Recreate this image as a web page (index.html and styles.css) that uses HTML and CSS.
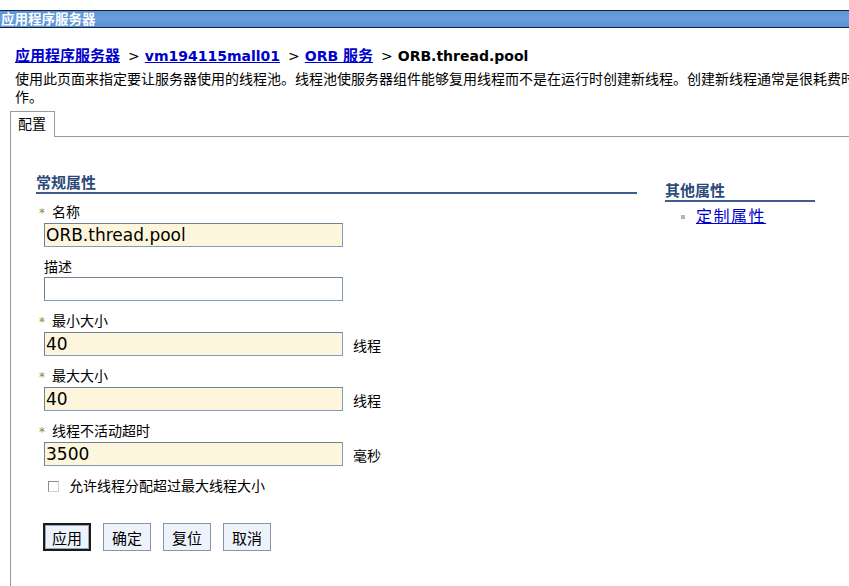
FILE: index.html
```html
<!DOCTYPE html>
<html lang="zh-CN">
<head>
  <meta charset="UTF-8" />
  <title>ORB.thread.pool</title>
  <link rel="stylesheet" href="styles.css">
</head>
<body>
  <div class="titlebar">应用程序服务器</div>

  <div class="crumbs">
    <a href="#" class="zh">应用程序服务器</a><span class="sep">&gt;</span><a href="#">vm194115mall01</a><span class="sep">&gt;</span><a href="#">ORB <span class="zh">服务</span></a><span class="sep">&gt;</span><span class="current">ORB.thread.pool</span>
  </div>
  <p class="intro">使用此页面来指定要让服务器使用的线程池。线程池使服务器组件能够复用线程而不是在运行时创建新线程。创建新线程通常是很耗费时间的操作。</p>

  <div class="tabs">
    <div class="tab">配置</div>
  </div>

  <div class="panel">
    <div class="columns">
      <form class="general">
        <h2 class="section">常规属性</h2>

        <div class="field">
          <label><span class="star">*</span>名称</label>
          <input type="text" class="req" value="ORB.thread.pool">
        </div>
        <div class="field">
          <label>描述</label>
          <input type="text" value="">
        </div>
        <div class="field">
          <label><span class="star">*</span>最小大小</label>
          <div class="row"><input type="text" class="req" value="40"><span class="unit">线程</span></div>
        </div>
        <div class="field">
          <label><span class="star">*</span>最大大小</label>
          <div class="row"><input type="text" class="req" value="40"><span class="unit">线程</span></div>
        </div>
        <div class="field">
          <label><span class="star">*</span>线程不活动超时</label>
          <div class="row"><input type="text" class="req" value="3500"><span class="unit">毫秒</span></div>
        </div>

        <label class="check"><input type="checkbox">允许线程分配超过最大线程大小</label>

        <div class="buttons">
          <button type="button" class="default">应用</button>
          <button type="button">确定</button>
          <button type="button">复位</button>
          <button type="button">取消</button>
        </div>
      </form>

      <div class="other">
        <h2 class="section">其他属性</h2>
        <ul class="links">
          <li><a href="#">定制属性</a></li>
        </ul>
      </div>
    </div>
  </div>
</body>
</html>
```

FILE: styles.css
```css
:root {
  --font: "DejaVu Sans", "Noto Sans CJK SC", sans-serif;
  --link: #0000cc;
  --head: #2b4a78;
  --rule: #9a9aa6;
  --field-border: #7f9db9;
  --field-bg: #fdf6dc;
}

html, body {
  margin: 0;
  overflow: hidden;
  height: 100%;
}

body {
  font-family: var(--font);
  font-size: 14px;
  color: #000;
  background: #fff;
  display: flex;
  flex-direction: column;
}

.titlebar {
  margin-top: 10px;
  height: 16px;
  line-height: 16px;
  padding-left: 1px;
  border-top: 1px solid #14233d;
  border-bottom: 1px solid #14233d;
  background: linear-gradient(#5b93d6, #6a9fe0 50%, #5890d4);
  color: #fff;
  font-weight: bold;
  font-size: 13.5px;
  white-space: nowrap;
}

.crumbs {
  margin-top: 19px;
  padding-left: 15px;
  line-height: 18px;
  font-weight: bold;
  white-space: nowrap;
}

.crumbs a {
  color: var(--link);
}

.crumbs .zh {
  font-size: 15px;
}

.sep {
  font-weight: normal;
  margin: 0 5px 0 8px;
}

.intro {
  margin: 5px 0 0 15px;
  width: 890px;
  flex: none;
  line-height: 18px;
}

.tabs {
  margin: 5px 0 0 10px;
  display: flex;
  border-bottom: 1px solid var(--rule);
}

.tab {
  margin-bottom: -1px;
  padding: 0 8px 0 7px;
  height: 25px;
  line-height: 24px;
  border: 1px solid var(--rule);
  border-bottom: none;
  background: #fff;
}

.panel {
  flex: 1;
  margin-left: 10px;
  border-left: 1px solid var(--rule);
  padding: 38px 0 0 25px;
}

.columns {
  display: flex;
  gap: 28px;
  align-items: flex-start;
}

.general {
  width: 601px;
  margin: 0;
}

.other {
  width: 150px;
  margin-top: 8px;
}

.section {
  margin: 0;
  font-size: 15px;
  line-height: 17px;
  font-weight: bold;
  color: var(--head);
  border-bottom: 2px solid #3d5d8c;
}

.field {
  margin-left: 8px;
  margin-bottom: 11px;
}

.general .section {
  margin-bottom: 9px;
}

.field label {
  display: block;
  line-height: 18px;
  margin-bottom: 1px;
}

.star {
  display: inline-block;
  width: 13px;
  margin-left: -5px;
  color: #8a8a34;
  font-size: 12px;
}

.row {
  display: flex;
  align-items: flex-end;
}

.field input {
  box-sizing: border-box;
  width: 299px;
  height: 24px;
  margin: 0;
  padding: 0 2px 0 1px;
  border: 1px solid var(--field-border);
  border-top-color: #6f8294;
  border-left-color: #6f8294;
  background: #fff;
  font-family: var(--font);
  font-size: 17px;
  color: #000;
  outline: none;
}

.field input.req {
  background: var(--field-bg);
}

.unit {
  margin-left: 10px;
  line-height: 18px;
  margin-bottom: 1px;
}

.check {
  display: flex;
  align-items: center;
  margin: 4px 0 0 12px;
  line-height: 18px;
}

.check input {
  appearance: none;
  box-sizing: border-box;
  width: 11px;
  height: 11px;
  margin: 0 10px 0 0;
  border: 1px solid #8c8c8c;
  border-right-color: #d0d0d0;
  border-bottom-color: #d0d0d0;
  background: #fff;
}

.buttons {
  display: flex;
  gap: 12px;
  margin: 28px 0 0 7px;
}

.buttons button {
  box-sizing: border-box;
  width: 48px;
  height: 28px;
  padding: 0;
  border: 1px solid #8795ab;
  background: #eef2fb;
  font-family: var(--font);
  font-size: 15px;
  color: #000;
}

.buttons .default {
  border: 2px solid #1a1a1a;
  box-shadow: inset 0 0 0 1px #9aa6bc;
}

.links {
  list-style: none;
  margin: 5px 0 0;
  padding: 0 0 0 16px;
}

.links li {
  display: flex;
  align-items: center;
  line-height: 20px;
}

.links li::before {
  content: "";
  width: 4px;
  height: 4px;
  margin-right: 11px;
  background: #b4b4b4;
}

.links a {
  color: var(--link);
  font-size: 16px;
  letter-spacing: 1.5px;
}
```
